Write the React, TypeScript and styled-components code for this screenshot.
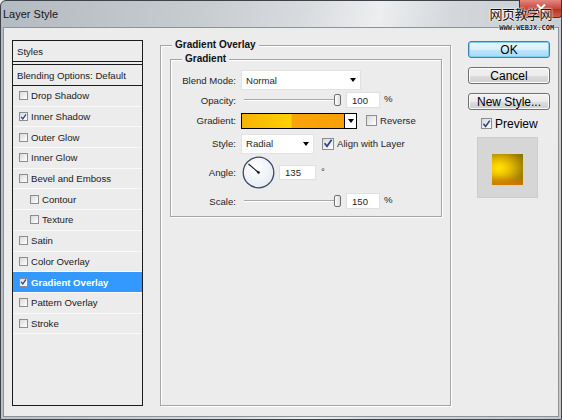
import React from "react";
import styled, { createGlobalStyle } from "styled-components";

const Global = createGlobalStyle`
  html, body { margin: 0; padding: 0; background: #ececec; }
  body { width: 562px; height: 420px; overflow: hidden; font-family: "Liberation Sans", Arial, sans-serif; }
  * { box-sizing: border-box; }
`;

const Window = styled.div`
  width: 562px;
  height: 420px;
  display: flex;
  flex-direction: column;
  border: 1px solid #3e434a;
  border-radius: 6px 6px 0 0;
  background: linear-gradient(100deg, #b4bac1 0%, #c6cbd0 30%, #d8dbde 48%, #eceeef 60%, #d3d7db 72%, #c2c7cc 100%);
`;

const TitleBar = styled.div`
  height: 26px;
  position: relative;
  display: flex;
  align-items: center;
  padding-left: 2px;
  font-size: 11px;
  color: #151515;
`;

const CloseBtn = styled.div`
  position: absolute;
  top: -1px;
  right: -1px;
  width: 43px;
  height: 18px;
  border: 1px solid #6e2018;
  border-top: none;
  border-radius: 0 0 4px 4px;
  background: linear-gradient(#e2877e, #c9473b 50%, #b1301f 51%, #d1604a);
  display: flex;
  align-items: center;
  justify-content: center;
`;

const CloseIcon = () => (
  <svg width="10" height="9" viewBox="0 0 10 9">
    <path d="M1 0.5 L9 8.5 M9 0.5 L1 8.5" stroke="#fff" strokeWidth="2" />
  </svg>
);

const Watermark = styled.div`
  position: absolute;
  right: 9px;
  top: 6px;
  display: flex;
  flex-direction: column;
  align-items: center;
`;

const WmCn = styled.span`
  font-family: "Noto Sans CJK SC", sans-serif;
  font-size: 13px;
  line-height: 14px;
  height: 14px;
  color: #111;
  letter-spacing: -0.5px;
  text-shadow: 0 0 2px #fff, 0 0 2px #fff, 0 0 1px #fff;
`;

const WmEn = styled.span`
  font-family: "DejaVu Sans Mono", monospace;
  font-size: 7px;
  line-height: 7px;
  font-weight: bold;
  color: #222;
  margin-top: 4px;
  margin-right: -12px;
  text-shadow: 0 0 2px #fff, 0 0 1px #fff;
`;

const Body = styled.div`
  flex: 1;
  margin: 0 2px 2px;
  border: 1px solid #8d9298;
  background: #ececec;
  display: flex;
  align-items: flex-start;
  padding-left: 8px;
`;

/* ---------- left list ---------- */
const StylesList = styled.div`
  margin-top: 12px;
  width: 131px;
  height: 366px;
  border: 1px solid #1c1c1c;
  display: flex;
  flex-direction: column;
  font-size: 9.6px;
  color: #1a1a1a;
`;

const ListHeader = styled.div<{ $top?: boolean }>`
  height: ${(p) => (p.$top ? 21 : 22)}px;
  display: flex;
  align-items: center;
  padding-left: 4px;
  border-bottom: 1px solid #1c1c1c;
  border-top: ${(p) => (p.$top ? "none" : "1px solid #1c1c1c")};
  margin-top: ${(p) => (p.$top ? 0 : 2)}px;
`;

const ListRow = styled.div<{ $indent?: boolean; $selected?: boolean }>`
  height: 20.7px;
  display: flex;
  align-items: center;
  gap: 3px;
  padding-left: ${(p) => (p.$indent ? 17 : 6)}px;
  border-bottom: 1px solid #fafafa;
  background: ${(p) => (p.$selected ? "#3399ff" : "transparent")};
  color: ${(p) => (p.$selected ? "#fff" : "#1a1a1a")};
  font-weight: ${(p) => (p.$selected ? "bold" : "normal")};
`;

const CheckBoxBox = styled.span<{ $size: number }>`
  width: ${(p) => p.$size}px;
  height: ${(p) => p.$size}px;
  flex: none;
  border: 1px solid #8b8d90;
  background: linear-gradient(135deg, #d9d9d9, #f4f4f4 70%, #ffffff);
  display: inline-flex;
  align-items: center;
  justify-content: center;
`;

const Check = ({ size = 10, checked = false }: { size?: number; checked?: boolean }) => (
  <CheckBoxBox $size={size}>
    {checked && (
      <svg viewBox="0 0 10 10" width={size - 1} height={size - 1}>
        <path d="M1.6 4.8 L4 7.8 L8.6 1.2" fill="none" stroke="#26418f" strokeWidth="1.7" />
      </svg>
    )}
  </CheckBoxBox>
);

/* ---------- group boxes ---------- */
const Group = styled.div<{ $w: number; $h: number; $mt: number; $ml: number }>`
  position: relative;
  width: ${(p) => p.$w}px;
  height: ${(p) => p.$h}px;
  margin-top: ${(p) => p.$mt}px;
  margin-left: ${(p) => p.$ml}px;
  border: 1px solid #a4a4a4;
  box-shadow: inset 1px 1px 0 #fff, 1px 1px 0 #fff;
  flex: none;
`;

const GroupTitle = styled.span`
  position: absolute;
  top: -7px;
  left: 11px;
  padding: 0 3px;
  background: #ececec;
  font-size: 10px;
  font-weight: bold;
  color: #111;
  line-height: 12px;
`;

const FormGrid = styled.div`
  display: grid;
  grid-template-columns: 65px 1fr;
  grid-template-rows: 20px 20px 21px 25px 32px 26px;
  column-gap: 5px;
  align-items: center;
  padding-top: 10px;
  font-size: 9.6px;
  color: #1f1f1f;
`;

const Label = styled.span`
  text-align: right;
`;

const Controls = styled.div`
  display: flex;
  align-items: center;
`;

const SelectBox = styled.div<{ $w: number }>`
  width: ${(p) => p.$w}px;
  height: 20px;
  background: #fff;
  border: 1px solid #e2e2e2;
  display: flex;
  align-items: center;
  justify-content: space-between;
  padding: 0 4px 0 4px;
`;

const Arrow = styled.span`
  width: 0;
  height: 0;
  border-left: 3.5px solid transparent;
  border-right: 3.5px solid transparent;
  border-top: 4px solid #000;
`;

const SliderWrap = styled.div`
  position: relative;
  width: 99px;
  height: 14px;
  margin-right: 6px;
`;

const Track = styled.div`
  position: absolute;
  left: 3px;
  right: 3px;
  top: 6px;
  height: 2px;
  border-top: 1px solid #a8a8a8;
  border-bottom: 1px solid #fff;
`;

const Thumb = styled.div`
  position: absolute;
  top: 1px;
  width: 7px;
  height: 12px;
  border: 1px solid #6f6f6f;
  border-radius: 2px;
  background: linear-gradient(90deg, #ffffff, #dcdcdc);
`;

const Slider = ({ value }: { value: number }) => (
  <SliderWrap>
    <Track />
    <Thumb style={{ left: `${value * 93}px` }} />
  </SliderWrap>
);

const NumInput = styled.div<{ $w: number; $h: number; $ml?: number }>`
  width: ${(p) => p.$w}px;
  height: ${(p) => p.$h}px;
  margin-left: ${(p) => p.$ml ?? 0}px;
  background: #fff;
  border: 1px solid #e0e0e0;
  display: flex;
  align-items: center;
  padding-left: 5px;
`;

const Unit = styled.span<{ $ml: number; $raise: number }>`
  margin-left: ${(p) => p.$ml}px;
  margin-bottom: ${(p) => p.$raise * 2}px;
`;

const GradientSwatch = styled.div`
  width: 104px;
  height: 16px;
  border: 1px solid #000;
  background: linear-gradient(90deg, #f6b400 0%, #fbc400 30%, #ffd200 48%, #f9a40a 49.5%, #f8a106 100%);
`;

const SwatchArrow = styled.div`
  width: 12px;
  height: 16px;
  border: 1px solid #000;
  border-left: none;
  background: #fff;
  display: flex;
  align-items: center;
  justify-content: center;
`;

const CheckLabel = styled.label<{ $ml: number }>`
  display: flex;
  align-items: center;
  gap: 3px;
  margin-left: ${(p) => p.$ml}px;
`;

const AngleDial = () => (
  <svg width="33" height="33" viewBox="0 0 33 33" style={{ marginLeft: 1, flex: "none" }}>
    <defs>
      <radialGradient id="dialg" cx="40%" cy="35%" r="70%">
        <stop offset="0%" stopColor="#ffffff" />
        <stop offset="100%" stopColor="#e6ebf2" />
      </radialGradient>
    </defs>
    <circle cx="16.5" cy="16.5" r="15.3" fill="url(#dialg)" stroke="#3a4a6c" strokeWidth="1.3" />
    <line x1="16.5" y1="16.5" x2="6.5" y2="8" stroke="#111" strokeWidth="1.1" />
    <circle cx="16.5" cy="16.5" r="1.3" fill="#111" />
  </svg>
);

/* ---------- right column ---------- */
const RightCol = styled.div`
  margin-top: 13px;
  margin-left: 17px;
  width: 82px;
  display: flex;
  flex-direction: column;
  gap: 9px;
`;

const Button = styled.div<{ $default?: boolean }>`
  height: 17px;
  border-radius: 3px;
  border: 1px solid ${(p) => (p.$default ? "#3c7fb1" : "#707070")};
  background: ${(p) =>
    p.$default
      ? "linear-gradient(#eaf6fd, #d9f0fc 50%, #bee6fd 51%, #a7d9f5)"
      : "linear-gradient(#f2f2f2, #ebebeb 50%, #dddddd 51%, #cfcfcf)"};
  box-shadow: ${(p) => (p.$default ? "inset 0 0 0 1px #7ed0f5" : "inset 0 0 0 1px #fbfbfb")};
  display: flex;
  align-items: center;
  justify-content: center;
  font-size: 12px;
  color: #000;
`;

const PreviewToggle = styled.div`
  display: flex;
  align-items: center;
  gap: 3px;
  margin: -2px 0 0 13px;
  height: 13px;
  font-size: 12px;
  color: #000;
`;

const PreviewBox = styled.div`
  margin: -2px 0 0 9px;
  width: 61px;
  height: 61px;
  background: #d6d6d6;
  border: 1px solid #cdcdcd;
  display: flex;
  justify-content: center;
  padding-top: 16px;
`;

const PreviewSwatch = styled.div`
  width: 31px;
  height: 31px;
  background:
    linear-gradient(to bottom, rgba(0, 0, 0, 0) 70%, rgba(225, 120, 0, 0.85) 100%),
    radial-gradient(ellipse at 22% 45%, #ffe400 0%, #f5cc00 22%, #d3aa00 45%, #a48400 70%, #7a6300 100%);
`;

const items: { label: string; checked?: boolean; indent?: boolean; selected?: boolean }[] = [
  { label: "Drop Shadow" },
  { label: "Inner Shadow", checked: true },
  { label: "Outer Glow" },
  { label: "Inner Glow" },
  { label: "Bevel and Emboss" },
  { label: "Contour", indent: true },
  { label: "Texture", indent: true },
  { label: "Satin" },
  { label: "Color Overlay" },
  { label: "Gradient Overlay", checked: true, selected: true },
  { label: "Pattern Overlay" },
  { label: "Stroke" },
];

export default function App() {
  return (
    <>
      <Global />
      <Window>
        <TitleBar>
          Layer Style
          <CloseBtn>
            <CloseIcon />
          </CloseBtn>
          <Watermark>
            <WmCn>网页教学网</WmCn>
            <WmEn>WWW.WEBJX.COM</WmEn>
          </Watermark>
        </TitleBar>
        <Body>
          <StylesList>
            <ListHeader $top>Styles</ListHeader>
            <ListHeader>Blending Options: Default</ListHeader>
            {items.map((it) => (
              <ListRow key={it.label} $indent={it.indent} $selected={it.selected}>
                <Check size={9} checked={it.checked} />
                {it.label}
              </ListRow>
            ))}
          </StylesList>

          <Group $w={291} $h={361} $mt={17} $ml={17}>
            <GroupTitle>Gradient Overlay</GroupTitle>
            <Group $w={272} $h={158} $mt={13} $ml={9}>
              <GroupTitle>Gradient</GroupTitle>
              <FormGrid>
                <Label>Blend Mode:</Label>
                <Controls>
                  <SelectBox $w={120}>
                    Normal
                    <Arrow />
                  </SelectBox>
                </Controls>

                <Label>Opacity:</Label>
                <Controls>
                  <Slider value={1} />
                  <NumInput $w={34} $h={16}>100</NumInput>
                  <Unit $ml={4} $raise={2}>%</Unit>
                </Controls>

                <Label>Gradient:</Label>
                <Controls>
                  <GradientSwatch />
                  <SwatchArrow>
                    <Arrow />
                  </SwatchArrow>
                  <CheckLabel $ml={9}>
                    <Check size={11} />
                    Reverse
                  </CheckLabel>
                </Controls>

                <Label>Style:</Label>
                <Controls>
                  <SelectBox $w={73}>
                    Radial
                    <Arrow />
                  </SelectBox>
                  <CheckLabel $ml={8}>
                    <Check size={12} checked />
                    Align with Layer
                  </CheckLabel>
                </Controls>

                <Label>Angle:</Label>
                <Controls>
                  <AngleDial />
                  <NumInput $w={37} $h={15} $ml={4}>135</NumInput>
                  <Unit $ml={5} $raise={1}>°</Unit>
                </Controls>

                <Label>Scale:</Label>
                <Controls>
                  <Slider value={1} />
                  <NumInput $w={34} $h={16}>150</NumInput>
                  <Unit $ml={4} $raise={2}>%</Unit>
                </Controls>
              </FormGrid>
            </Group>
          </Group>

          <RightCol>
            <Button $default>OK</Button>
            <Button>Cancel</Button>
            <Button>New Style...</Button>
            <PreviewToggle>
              <Check size={11} checked />
              Preview
            </PreviewToggle>
            <PreviewBox>
              <PreviewSwatch />
            </PreviewBox>
          </RightCol>
        </Body>
      </Window>
    </>
  );
}
